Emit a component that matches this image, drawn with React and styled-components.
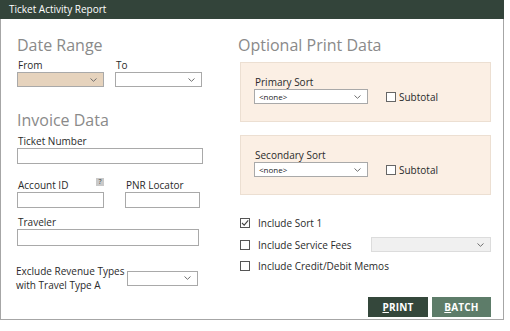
import styled, { createGlobalStyle } from "styled-components"

const GlobalStyle = createGlobalStyle`
  html, body { margin: 0; padding: 0; background: #fff; }
  body { font-family: "Open Sans", "Noto Sans", sans-serif; }
  * { box-sizing: border-box; }
`

function Chevron() {
  return (
    <svg width="7" height="4" viewBox="0 0 7 4">
      <path d="M0.5 0.5 L3.5 3.3 L6.5 0.5" fill="none" stroke="#6f6f6f" strokeWidth="1" />
    </svg>
  )
}

function Check({ checked }) {
  return (
    <CheckBox>
      {checked ? (
        <svg width="8" height="8" viewBox="0 0 8 8">
          <path d="M1 4 L3.2 6.2 L7.2 1.3" fill="none" stroke="#444" strokeWidth="1.1" />
        </svg>
      ) : null}
    </CheckBox>
  )
}

function Select({ width, tan, disabled, value }) {
  return (
    <SelectBox $width={width} $tan={tan} $disabled={disabled}>
      <SelectText>{value}</SelectText>
      <Chevron />
    </SelectBox>
  )
}

export default function App() {
  return (
    <>
      <GlobalStyle />
      <Window>
        <TitleBar>Ticket Activity Report</TitleBar>
        <Body>
          <LeftCol>
            <Heading>Date Range</Heading>
            <Row $gap={11}>
              <Field>
                <Label>From</Label>
                <Select width={87} tan />
              </Field>
              <Field>
                <Label>To</Label>
                <Select width={87} />
              </Field>
            </Row>

            <Heading $top={22}>Invoice Data</Heading>
            <Field $top={1}>
              <Label>Ticket Number</Label>
              <Input $width={186} $height={16} />
            </Field>

            <Row $gap={21} $top={15}>
              <Field>
                <Label>
                  Account ID
                  <Help>?</Help>
                </Label>
                <Input $width={87} $height={16} />
              </Field>
              <Field>
                <Label>PNR Locator</Label>
                <Input $width={75} $height={16} />
              </Field>
            </Row>

            <Field $top={8}>
              <Label>Traveler</Label>
              <Input $width={182} $height={17} />
            </Field>

            <ExcludeRow>
              <ExcludeText>
                Exclude Revenue Types
                <br />
                with Travel Type A
              </ExcludeText>
              <Select width={71} />
            </ExcludeRow>
          </LeftCol>

          <RightCol>
            <Heading $indent={-2}>Optional Print Data</Heading>
            <Panel $top={3}>
              <Field>
                <Label>Primary Sort</Label>
                <SortRow>
                  <Select width={114} value="<none>" />
                  <SubCheck>
                    <SmallBox />
                    Subtotal
                  </SubCheck>
                </SortRow>
              </Field>
            </Panel>
            <Panel $top={13}>
              <Field>
                <Label>Secondary Sort</Label>
                <SortRow>
                  <Select width={114} value="<none>" />
                  <SubCheck>
                    <SmallBox />
                    Subtotal
                  </SubCheck>
                </SortRow>
              </Field>
            </Panel>

            <Options>
              <OptionRow>
                <Check checked />
                <OptionText>Include Sort 1</OptionText>
              </OptionRow>
              <OptionRow>
                <Check />
                <OptionText $width={113}>Include Service Fees</OptionText>
                <Select width={120} disabled />
              </OptionRow>
              <OptionRow>
                <Check />
                <OptionText>Include Credit/Debit Memos</OptionText>
              </OptionRow>
            </Options>

            <Buttons>
              <Button>
                <u>P</u>RINT
              </Button>
              <Button $light>
                <u>B</u>ATCH
              </Button>
            </Buttons>
          </RightCol>
        </Body>
      </Window>
    </>
  )
}

const Window = styled.div`
  width: 504px;
  height: 320px;
  border: 1px solid #a6a6a6;
  border-top: none;
  background: #fff;
  display: flex;
  flex-direction: column;
`

const TitleBar = styled.div`
  height: 19px;
  margin: 0 -1px;
  background: #33443a;
  color: #fff;
  font-size: 10px;
  line-height: 19px;
  padding-left: 9px;
`

const Body = styled.div`
  flex: 1;
  display: flex;
  padding: 15px 0 0 16px;
`

const LeftCol = styled.div`
  width: 223px;
  display: flex;
  flex-direction: column;
`

const RightCol = styled.div`
  flex: 1;
  display: flex;
  flex-direction: column;
  padding-right: 11px;
`

const Heading = styled.div`
  margin-top: ${(p) => p.$top || 0}px;
  margin-left: ${(p) => p.$indent || 0}px;
  font-size: 16px;
  line-height: 22px;
  color: #8a8a8a;
  font-weight: 400;
  margin-bottom: 3px;
`

const Row = styled.div`
  display: flex;
  gap: ${(p) => p.$gap}px;
  margin-top: ${(p) => p.$top || 0}px;
`

const Field = styled.div`
  display: flex;
  flex-direction: column;
  margin-top: ${(p) => p.$top || 0}px;
`

const Label = styled.div`
  position: relative;
  font-size: 10px;
  line-height: 13px;
  color: #2a2a2a;
  padding-left: 1px;
`

const Help = styled.span`
  position: absolute;
  right: 0;
  top: -1px;
  width: 8px;
  height: 8px;
  background: #c9c9c9;
  color: #444;
  font-size: 7px;
  line-height: 8px;
  text-align: center;
`

const Input = styled.div`
  width: ${(p) => p.$width}px;
  height: ${(p) => p.$height}px;
  border: 1px solid #a9a9a9;
  background: #fff;
`

const SelectBox = styled.div`
  width: ${(p) => p.$width}px;
  height: 15px;
  border: 1px solid ${(p) => (p.$disabled ? "#dcdcdc" : "#a9a9a9")};
  background: ${(p) => (p.$tan ? "#e6d3bd" : p.$disabled ? "#f0f0f0" : "#fff")};
  display: flex;
  align-items: center;
  justify-content: space-between;
  padding: 0 6px 0 4px;
  flex-shrink: 0;
`

const SelectText = styled.span`
  font-size: 8px;
  color: #222;
`

const ExcludeRow = styled.div`
  display: flex;
  align-items: center;
  margin-top: 18px;
  margin-left: -1px;
`

const ExcludeText = styled.div`
  width: 111px;
  font-size: 10px;
  line-height: 14px;
  color: #2a2a2a;
  white-space: nowrap;
`

const Panel = styled.div`
  width: 251px;
  height: 60px;
  margin-top: ${(p) => p.$top || 0}px;
  background: #fbefe4;
  border: 1px solid #ecdfd2;
  padding: 13px 0 0 13px;
`

const SortRow = styled.div`
  display: flex;
  align-items: center;
  gap: 18px;
`

const SubCheck = styled.div`
  display: flex;
  align-items: center;
  gap: 3px;
  font-size: 10px;
  color: #2a2a2a;
`

const SmallBox = styled.span`
  width: 10px;
  height: 10px;
  border: 1px solid #666;
  background: #fff;
`

const CheckBox = styled.span`
  width: 10px;
  height: 10px;
  border: 1px solid #555;
  background: #fff;
  display: flex;
  align-items: center;
  justify-content: center;
  flex-shrink: 0;
`

const Options = styled.div`
  display: flex;
  flex-direction: column;
  gap: 11.5px;
  margin-top: 23px;
`

const OptionRow = styled.div`
  display: flex;
  align-items: center;
  height: 10px;
`

const OptionText = styled.span`
  font-size: 10px;
  color: #2a2a2a;
  margin-left: 8px;
  white-space: nowrap;
  width: ${(p) => (p.$width ? `${p.$width}px` : "auto")};
`

const Buttons = styled.div`
  display: flex;
  justify-content: flex-end;
  gap: 4px;
  margin-top: 26px;
  padding-right: 1px;
`

const Button = styled.div`
  width: ${(p) => (p.$light ? 59 : 60)}px;
  height: 20px;
  background: ${(p) => (p.$light ? "#5d7c69" : "#34473b")};
  color: #fff;
  font-size: 10px;
  font-weight: 700;
  line-height: 20px;
  text-align: center;
  letter-spacing: 0.2px;
`
